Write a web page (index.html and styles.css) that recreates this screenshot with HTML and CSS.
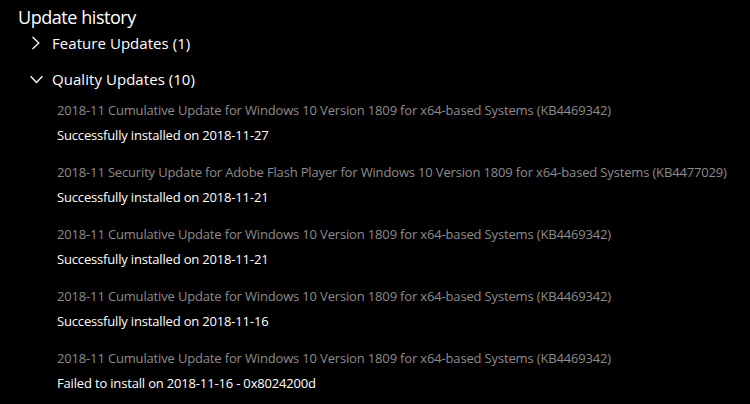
FILE: index.html
```html
<!DOCTYPE html>
<html>
<head>
<meta charset="utf-8">
<link rel="stylesheet" href="styles.css">
</head>
<body>
<div class="page">
  <h1 class="title">Update history</h1>
  <div class="group">
    <div class="group-head">
      <svg class="chev right" width="10" height="14" viewBox="0 0 10 14"><path d="M1.5 1 L7.8 7 L1.5 13" fill="none" stroke="#fff" stroke-width="1.3"/></svg>
      <span>Feature Updates (1)</span>
    </div>
  </div>
  <div class="group">
    <div class="group-head open">
      <svg class="chev down" width="13" height="9" viewBox="0 0 13 9"><path d="M0.6 1.2 L6.5 7.5 L12.4 1.2" fill="none" stroke="#fff" stroke-width="1.3"/></svg>
      <span>Quality Updates (10)</span>
    </div>
    <ul class="items">
      <li class="item"><div class="name">2018-11 Cumulative Update for Windows 10 Version 1809 for x64-based Systems (KB4469342)</div><div class="status">Successfully installed on 2018-11-27</div></li>
      <li class="item"><div class="name">2018-11 Security Update for Adobe Flash Player for Windows 10 Version 1809 for x64-based Systems (KB4477029)</div><div class="status">Successfully installed on 2018-11-21</div></li>
      <li class="item"><div class="name">2018-11 Cumulative Update for Windows 10 Version 1809 for x64-based Systems (KB4469342)</div><div class="status">Successfully installed on 2018-11-21</div></li>
      <li class="item"><div class="name">2018-11 Cumulative Update for Windows 10 Version 1809 for x64-based Systems (KB4469342)</div><div class="status">Successfully installed on 2018-11-16</div></li>
      <li class="item"><div class="name">2018-11 Cumulative Update for Windows 10 Version 1809 for x64-based Systems (KB4469342)</div><div class="status">Failed to install on 2018-11-16 - 0x8024200d</div></li>
    </ul>
  </div>
</div>
</body>
</html>
```
FILE: styles.css
```css
html, body {
  margin: 0;
  padding: 0;
  background: #000;
  color: #fff;
  font-family: "Open Sans", "Noto Sans", sans-serif;
  overflow: hidden;
}
.page {
  padding: 4px 0 0 18px;
}
.title {
  margin: 0;
  font-size: 18px;
  font-weight: 400;
  line-height: 26px;
  letter-spacing: -0.45px;
}
.group-head {
  display: flex;
  align-items: center;
  gap: 11px;
  font-size: 15px;
  line-height: 22px;
  letter-spacing: 0.05px;
  margin-left: 13px;
  margin-top: 2px;
}
.group + .group .group-head {
  margin-left: 12px;
  margin-top: 14px;
  gap: 9px;
}
.items {
  list-style: none;
  margin: 10px 0 0 39px;
  padding: 0;
  display: flex;
  flex-direction: column;
  gap: 17px;
}
.item {
  display: flex;
  flex-direction: column;
  gap: 5px;
}
.name {
  color: #8c8c8c;
  font-size: 13px;
  line-height: 20px;
  letter-spacing: -0.16px;
  white-space: nowrap;
}
.status {
  color: #fff;
  font-size: 13px;
  line-height: 20px;
  letter-spacing: -0.17px;
}
```
